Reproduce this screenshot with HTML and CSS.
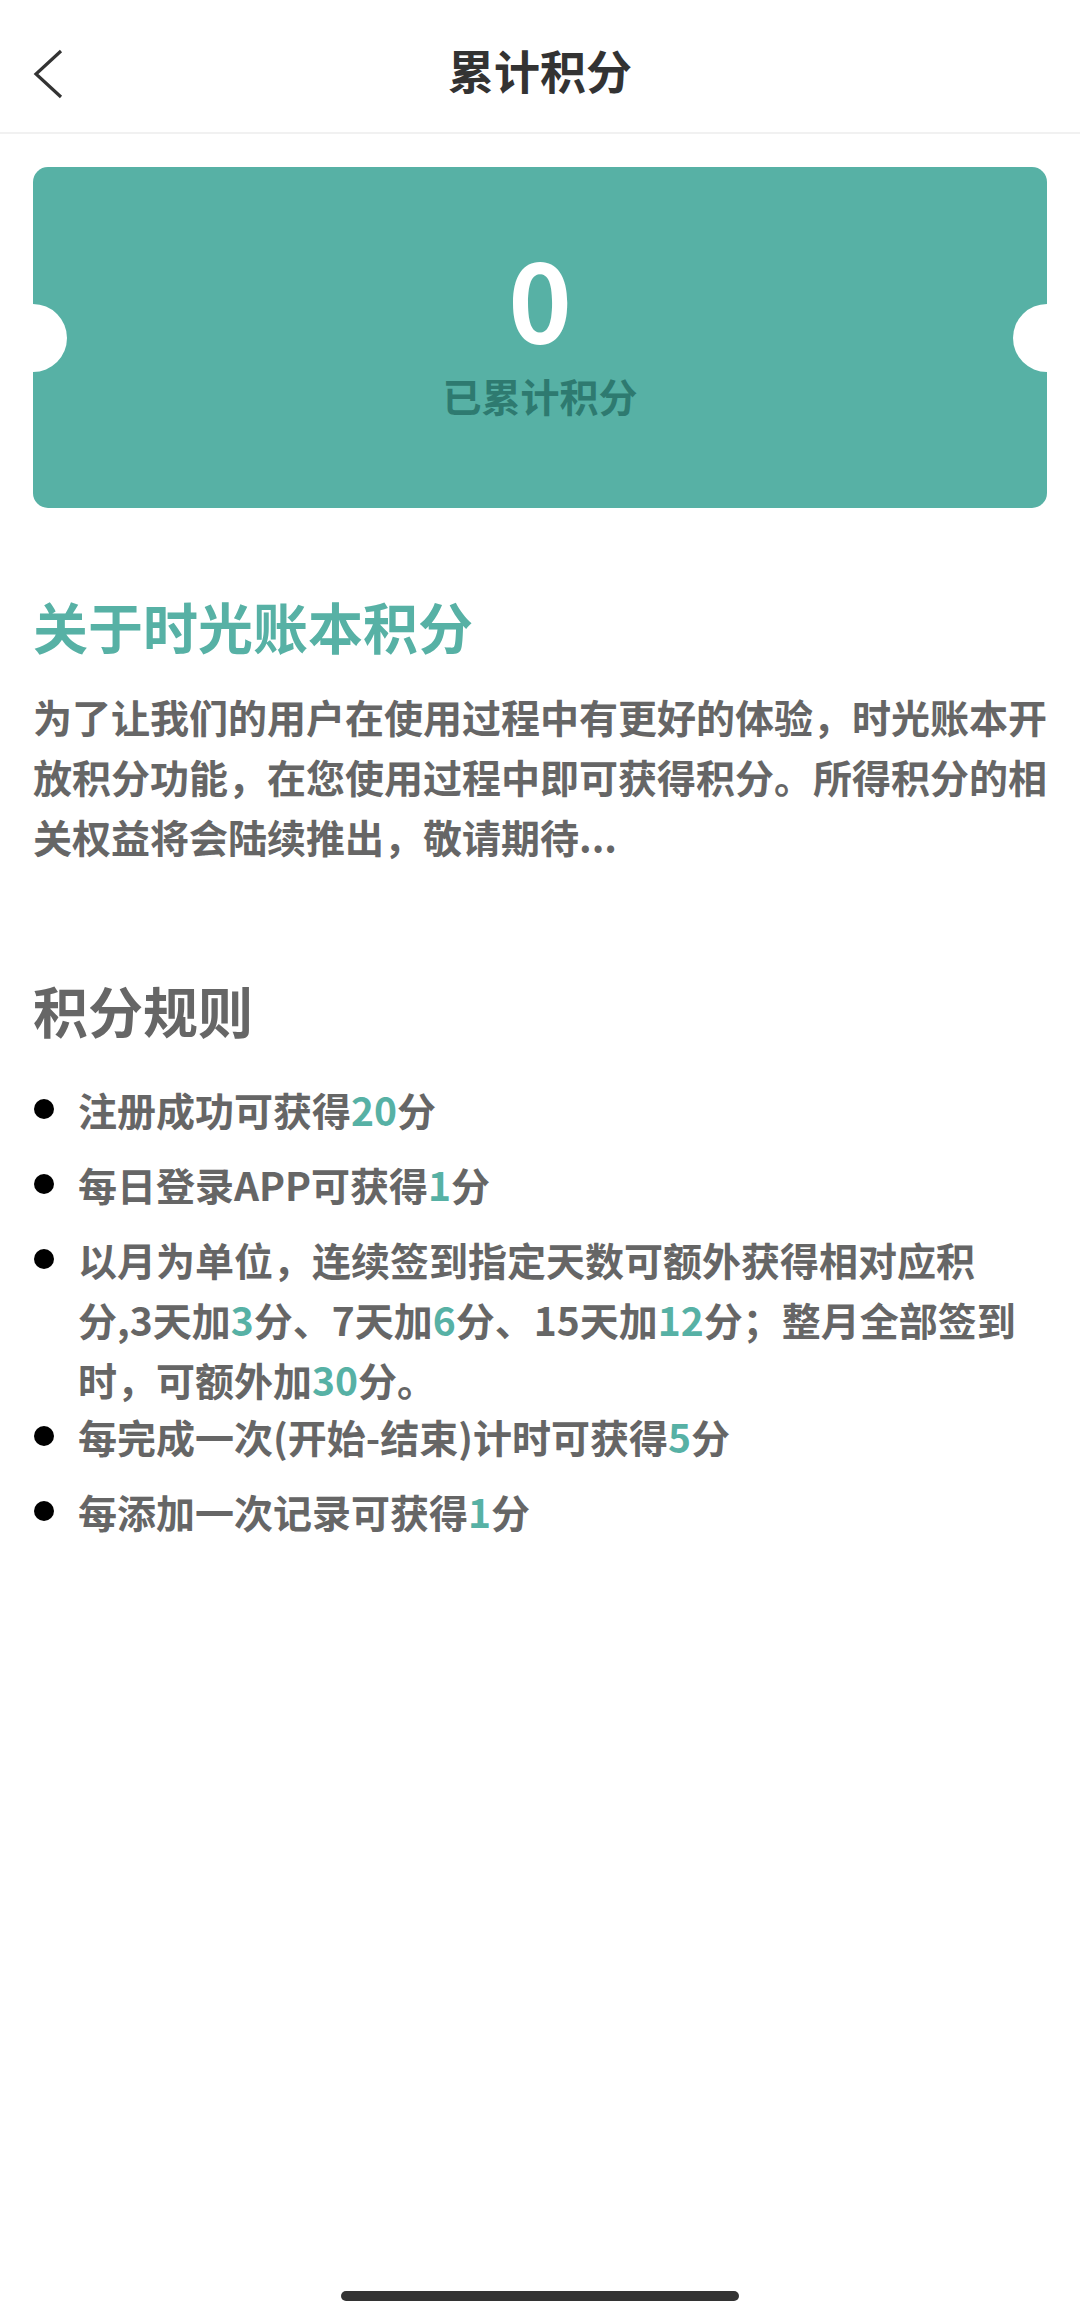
FILE: index.html
```html
<!DOCTYPE html>
<html lang="zh-CN">
<head>
    <meta charset="UTF-8">
    <meta name="viewport" content="width=device-width, initial-scale=1.0">
    <title>累计积分</title>
    <link rel="stylesheet" href="styles.css">
</head>
<body>
    <div class="page">
        <header class="nav">
            <a class="nav-back" href="#">
                <svg width="30" height="50" viewBox="0 0 30 50">
                    <path d="M28 2 L3 25 L28 48" fill="none" stroke="#333" stroke-width="3.2" stroke-linejoin="miter"/>
                </svg>
            </a>
            <h1 class="nav-title">累计积分</h1>
            <span></span>
        </header>

        <main class="content">
            <section class="score-card">
                <div class="score-value">0</div>
                <div class="score-label">已累计积分</div>
            </section>

            <section class="about">
                <h2 class="about-title">关于时光账本积分</h2>
                <p class="about-text">为了让我们的用户在使用过程中有更好的体验，时光账本开放积分功能，在您使用过程中即可获得积分。所得积分的相关权益将会陆续推出，敬请期待...</p>
            </section>

            <section class="rules">
                <h2 class="rules-title">积分规则</h2>
                <ul class="rule-list">
                    <li class="rule"><span class="rule-text">注册成功可获得<em>20</em>分</span></li>
                    <li class="rule"><span class="rule-text">每日登录APP可获得<em>1</em>分</span></li>
                    <li class="rule"><span class="rule-text">以月为单位，连续签到指定天数可额外获得相对应积<br>分,3天加<em>3</em>分、7天加<em>6</em>分、15天加<em>12</em>分；整月全部签到<br>时，可额外加<em>30</em>分。</span></li>
                    <li class="rule rule-tight"><span class="rule-text">每完成一次(开始-结束)计时可获得<em>5</em>分</span></li>
                    <li class="rule"><span class="rule-text">每添加一次记录可获得<em>1</em>分</span></li>
                </ul>
            </section>
        </main>

        <div class="home-bar"></div>
    </div>
</body>
</html>
```

FILE: styles.css
```css
* {
    box-sizing: border-box;
    margin: 0;
    padding: 0;
}

body {
    width: 1080px;
    font-family: "Noto Sans CJK SC", "Noto Sans", sans-serif;
    background-color: #fff;
    color: #666;
}

.page {
    min-height: 2318px;
    display: flex;
    flex-direction: column;
}

/* top bar */
.nav {
    height: 134px;
    display: grid;
    grid-template-columns: 1fr auto 1fr;
    align-items: center;
    padding: 0 33px;
    border-bottom: 2px solid #f1f1f1;
}

.nav-back {
    display: flex;
    width: 30px;
    height: 50px;
    margin-top: 16px;
}

.nav-title {
    margin-top: 6px;
    font-size: 46px;
    font-weight: 700;
    color: #333;
    line-height: 1;
}

.content {
    padding: 0 33px;
}

/* score ticket */
.score-card {
    position: relative;
    margin-top: 33px;
    height: 341px;
    padding-bottom: 14px;
    border-radius: 15px;
    background-color: #57b1a5;
    display: flex;
    flex-direction: column;
    align-items: center;
    justify-content: center;
}

.score-card::before,
.score-card::after {
    content: "";
    position: absolute;
    top: 50%;
    width: 68px;
    height: 68px;
    margin-top: -34px;
    border-radius: 50%;
    background-color: #fff;
}

.score-card::before {
    left: -34px;
}

.score-card::after {
    right: -34px;
}

.score-value {
    font-size: 108px;
    font-weight: 700;
    color: #fff;
    line-height: 108px;
}

.score-label {
    margin-top: 20px;
    font-size: 39px;
    font-weight: 700;
    color: #2e7a70;
    line-height: 50px;
}

/* about */
.about-title,
.rules-title {
    font-size: 55px;
    font-weight: 700;
    line-height: 66px;
}

.about-title {
    margin-top: 84px;
    color: #57b1a5;
}

.about-text {
    margin-top: 28px;
    font-size: 39px;
    font-weight: 700;
    line-height: 60px;
    color: #666;
}

/* rules */
.rules-title {
    margin-top: 110px;
    color: #666;
}

.rule-list {
    list-style: none;
    margin-top: 37px;
}

.rule {
    display: grid;
    grid-template-columns: 45px 1fr;
    margin-bottom: 15px;
    font-size: 39px;
    font-weight: 700;
    line-height: 60px;
}

.rule::before {
    content: "";
    width: 20px;
    height: 20px;
    margin-top: 20px;
    margin-left: 1px;
    border-radius: 50%;
    background-color: #000;
}

.rule-tight {
    margin-top: -18px;
}

.rule-text {
    white-space: nowrap;
}

.rule-text em {
    font-style: normal;
    color: #57b1a5;
}

.home-bar {
    align-self: center;
    margin-top: auto;
    margin-bottom: 17px;
    width: 398px;
    height: 10px;
    border-radius: 5px;
    background-color: #333;
}
```
